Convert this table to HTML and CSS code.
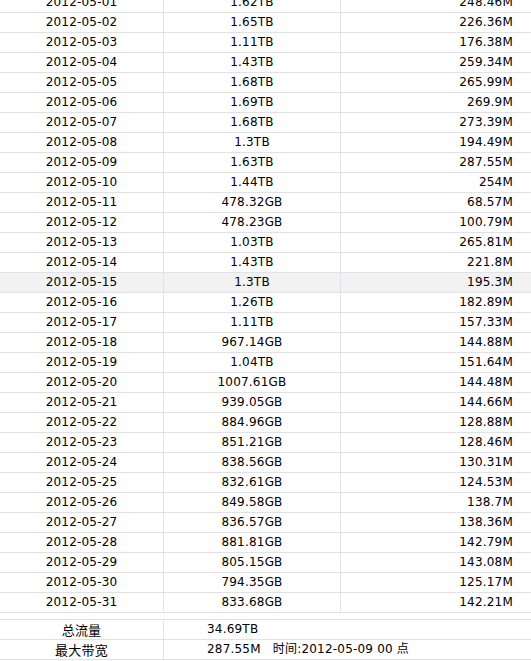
FILE: index.html
```html
<!DOCTYPE html>
<html>
<head>
<meta charset="utf-8">
<link rel="stylesheet" href="styles.css">
</head>
<body>
<table class="data">
<tr><td class="c1">2012-05-01</td><td class="c2">1.62TB</td><td class="c3">248.46M</td></tr>
<tr><td class="c1">2012-05-02</td><td class="c2">1.65TB</td><td class="c3">226.36M</td></tr>
<tr><td class="c1">2012-05-03</td><td class="c2">1.11TB</td><td class="c3">176.38M</td></tr>
<tr><td class="c1">2012-05-04</td><td class="c2">1.43TB</td><td class="c3">259.34M</td></tr>
<tr><td class="c1">2012-05-05</td><td class="c2">1.68TB</td><td class="c3">265.99M</td></tr>
<tr><td class="c1">2012-05-06</td><td class="c2">1.69TB</td><td class="c3">269.9M</td></tr>
<tr><td class="c1">2012-05-07</td><td class="c2">1.68TB</td><td class="c3">273.39M</td></tr>
<tr><td class="c1">2012-05-08</td><td class="c2">1.3TB</td><td class="c3">194.49M</td></tr>
<tr><td class="c1">2012-05-09</td><td class="c2">1.63TB</td><td class="c3">287.55M</td></tr>
<tr><td class="c1">2012-05-10</td><td class="c2">1.44TB</td><td class="c3">254M</td></tr>
<tr><td class="c1">2012-05-11</td><td class="c2">478.32GB</td><td class="c3">68.57M</td></tr>
<tr><td class="c1">2012-05-12</td><td class="c2">478.23GB</td><td class="c3">100.79M</td></tr>
<tr><td class="c1">2012-05-13</td><td class="c2">1.03TB</td><td class="c3">265.81M</td></tr>
<tr><td class="c1">2012-05-14</td><td class="c2">1.43TB</td><td class="c3">221.8M</td></tr>
<tr class="hover"><td class="c1">2012-05-15</td><td class="c2">1.3TB</td><td class="c3">195.3M</td></tr>
<tr><td class="c1">2012-05-16</td><td class="c2">1.26TB</td><td class="c3">182.89M</td></tr>
<tr><td class="c1">2012-05-17</td><td class="c2">1.11TB</td><td class="c3">157.33M</td></tr>
<tr><td class="c1">2012-05-18</td><td class="c2">967.14GB</td><td class="c3">144.88M</td></tr>
<tr><td class="c1">2012-05-19</td><td class="c2">1.04TB</td><td class="c3">151.64M</td></tr>
<tr><td class="c1">2012-05-20</td><td class="c2">1007.61GB</td><td class="c3">144.48M</td></tr>
<tr><td class="c1">2012-05-21</td><td class="c2">939.05GB</td><td class="c3">144.66M</td></tr>
<tr><td class="c1">2012-05-22</td><td class="c2">884.96GB</td><td class="c3">128.88M</td></tr>
<tr><td class="c1">2012-05-23</td><td class="c2">851.21GB</td><td class="c3">128.46M</td></tr>
<tr><td class="c1">2012-05-24</td><td class="c2">838.56GB</td><td class="c3">130.31M</td></tr>
<tr><td class="c1">2012-05-25</td><td class="c2">832.61GB</td><td class="c3">124.53M</td></tr>
<tr><td class="c1">2012-05-26</td><td class="c2">849.58GB</td><td class="c3">138.7M</td></tr>
<tr><td class="c1">2012-05-27</td><td class="c2">836.57GB</td><td class="c3">138.36M</td></tr>
<tr><td class="c1">2012-05-28</td><td class="c2">881.81GB</td><td class="c3">142.79M</td></tr>
<tr><td class="c1">2012-05-29</td><td class="c2">805.15GB</td><td class="c3">143.08M</td></tr>
<tr><td class="c1">2012-05-30</td><td class="c2">794.35GB</td><td class="c3">125.17M</td></tr>
<tr><td class="c1">2012-05-31</td><td class="c2">833.68GB</td><td class="c3">142.21M</td></tr>
</table>
<table class="summary">
<tr><td class="s1">总流量</td><td class="s2">34.69TB</td></tr>
<tr><td class="s1">最大带宽</td><td class="s2">287.55M&nbsp;&nbsp;&nbsp;时间:2012-05-09 00 点</td></tr>
</table>
</body>
</html>
```
FILE: styles.css
```css
html, body {
  margin: 0;
  padding: 0;
  background: #fff;
}
body {
  font-family: "DejaVu Sans", Verdana, "Noto Sans CJK SC", sans-serif;
  font-size: 12px;
  color: #000;
  overflow: hidden;
}
table {
  border-collapse: collapse;
  width: 531px;
  table-layout: fixed;
}
td {
  height: 19px;
  padding: 0;
  line-height: 19px;
  border-bottom: 1px solid #e2e2e6;
  white-space: nowrap;
  letter-spacing: 0.2px;
}
.data {
  margin-top: -7px;
}
.c1 {
  width: 163px;
  text-align: center;
  border-right: 1px solid #e2e2e6;
}
.c2 {
  width: 176px;
  text-align: center;
  border-right: 1px solid #e2e2e6;
}
.c3 {
  text-align: right;
  padding-right: 18px;
}
.hover td {
  background: #f2f2f2;
}
.summary {
  margin-top: 6px;
}
.summary tr:first-child td {
  border-top: 1px solid #e2e2e6;
}
.s1 {
  width: 163px;
  text-align: center;
  border-right: 1px solid #e2e2e6;
  font-family: "Noto Sans CJK SC", sans-serif;
  font-size: 13px;
}
.s2 {
  padding-left: 43px;
  font-family: "DejaVu Sans", "Noto Sans CJK SC", sans-serif;
}
```
